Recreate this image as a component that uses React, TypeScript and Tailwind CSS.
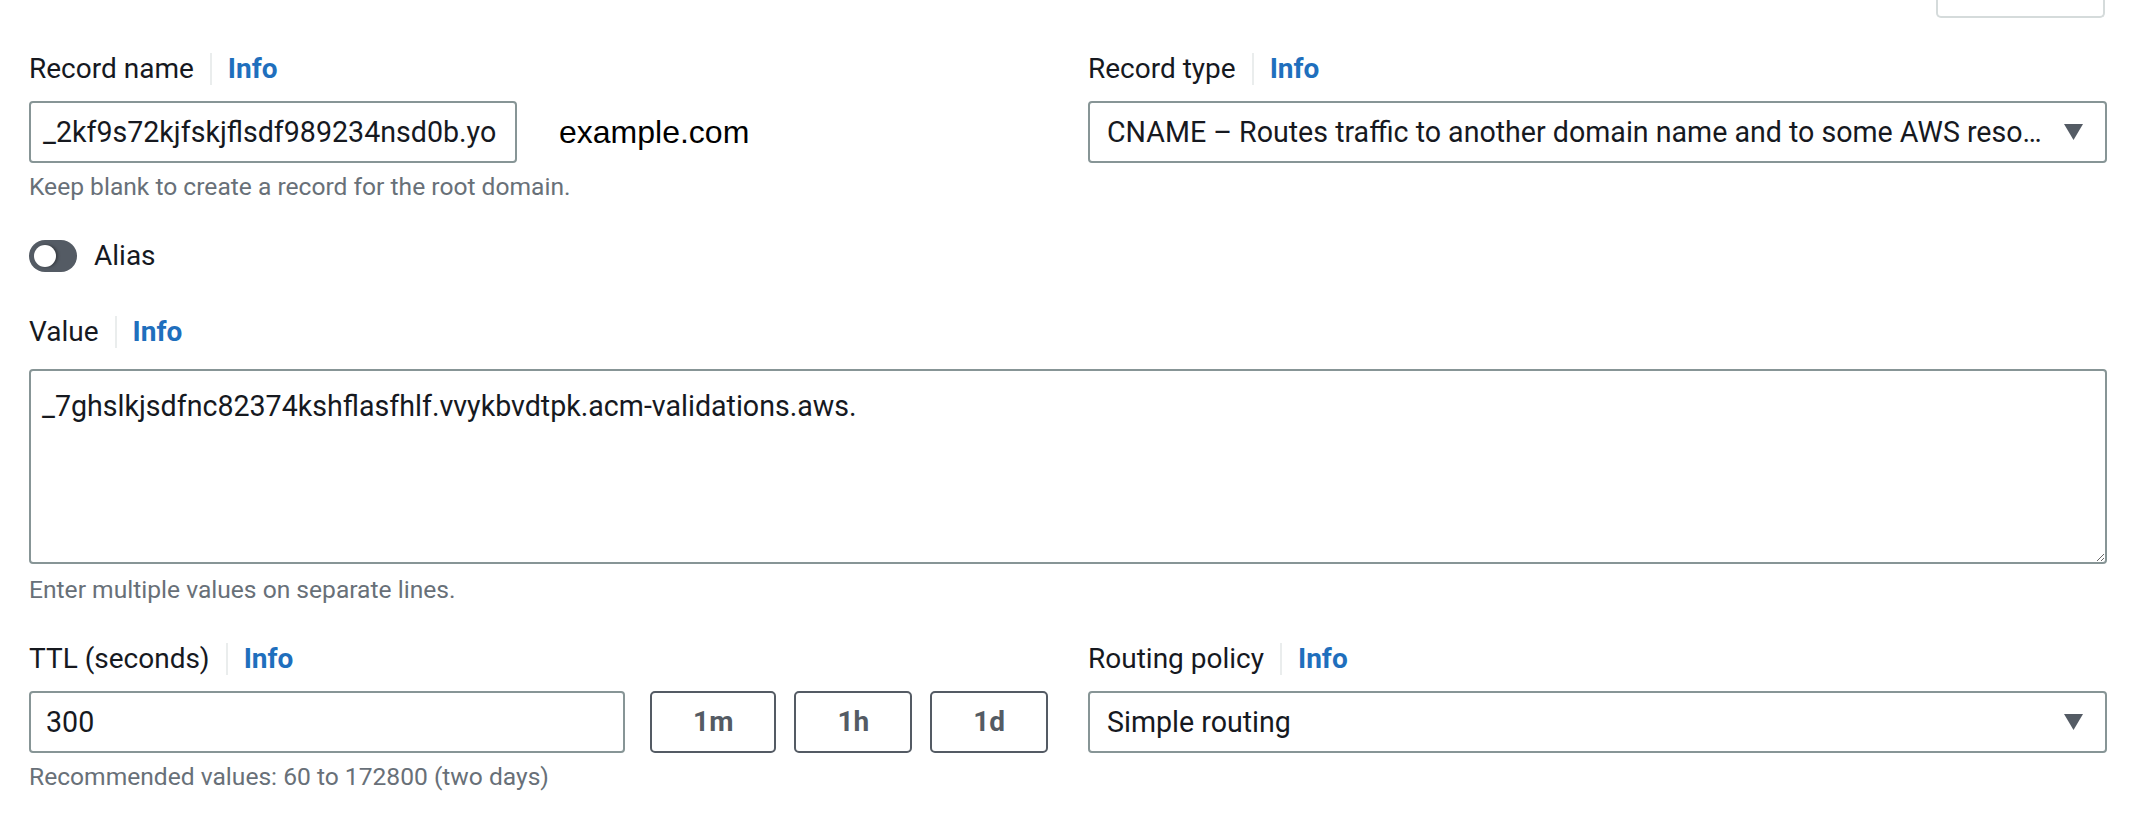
import React from 'react'

const font = { fontFamily: 'Roboto, "Open Sans", sans-serif' }

function Label({ text }: { text: string }) {
  return (
    <div className="flex h-[44px] items-center text-[28px] leading-[44px] text-[#16191f]">
      <span>{text}</span>
      <span className="mx-[16px] h-[32px] w-[2px] bg-[#eaeded]" />
      <span className="font-bold text-[#1f6fbd]">Info</span>
    </div>
  )
}

function Help({ text }: { text: string }) {
  return <div className="text-[24.6px] leading-[32px] text-[#687078]">{text}</div>
}

function Select({ value }: { value: string }) {
  return (
    <div className="flex h-[62px] w-full items-center rounded-[4px] border-2 border-[#879596] bg-white pl-[17px] pr-[22px]">
      <span className="min-w-0 flex-1 whitespace-nowrap pr-[18px] text-[28.6px] text-[#16191f]">{value}</span>
      <svg width="19" height="16" viewBox="0 0 19 16" className="shrink-0">
        <polygon points="0,0 19,0 9.5,16" fill="#545b64" />
      </svg>
    </div>
  )
}

function TtlButton({ text }: { text: string }) {
  return (
    <div className="flex h-[62px] items-center rounded-[5px] border-2 border-[#545b64] px-[41px] text-[28px] font-bold text-[#545b64]">
      {text}
    </div>
  )
}

export default function App() {
  return (
    <div className="min-h-[820px] w-full bg-white pl-[29px] pr-[31px]" style={font}>
      {/* bottom edge of a button cut off above */}
      <div className="flex justify-end">
        <div className="mr-[2px] h-[18px] w-[169px] rounded-b-[5px] border-x-2 border-b-2 border-[#d5dbdb]" />
      </div>

      <div className="mt-[29px] grid grid-cols-2 gap-x-[40px]">
        <div>
          <Label text="Record name" />
          <div className="mt-[10px] flex items-center">
            <div className="flex h-[62px] w-[488px] items-center overflow-hidden whitespace-nowrap rounded-[4px] border-2 border-[#879596] pl-[12px] text-[28.6px] text-[#16191f]">
              _2kf9s72kjfskjflsdf989234nsd0b.yo
            </div>
            <span className="ml-[42px] text-[32px] text-black" style={{ fontFamily: '"Liberation Sans", Arial, sans-serif' }}>
              example.com
            </span>
          </div>
          <div className="mt-[8px]">
            <Help text="Keep blank to create a record for the root domain." />
          </div>
        </div>
        <div>
          <Label text="Record type" />
          <div className="mt-[10px]">
            <Select value="CNAME – Routes traffic to another domain name and to some AWS reso…" />
          </div>
        </div>
      </div>

      <div className="mt-[31px] flex h-[44px] items-center">
        <div className="relative h-[32px] w-[48px] rounded-full bg-[#545b64]">
          <div className="absolute left-[5px] top-[5px] h-[22px] w-[22px] rounded-full bg-white shadow-[2px_0_3px_rgba(0,0,0,0.35)]" />
        </div>
        <span className="ml-[17px] text-[28px] leading-[44px] text-[#16191f]">Alias</span>
      </div>

      <div className="mt-[32px]">
        <Label text="Value" />
        <textarea
          readOnly
          defaultValue="_7ghslkjsdfnc82374kshflasfhlf.vvykbvdtpk.acm-validations.aws."
          className="mt-[15px] block h-[195px] w-full rounded-[4px] border-2 border-[#879596] px-[11px] pt-[13px] text-[28.6px] leading-[44px] text-[#16191f] outline-none"
          style={font}
        />
        <div className="mt-[10px]">
          <Help text="Enter multiple values on separate lines." />
        </div>
      </div>

      <div className="mt-[31px] grid grid-cols-2 gap-x-[40px]">
        <div>
          <Label text="TTL (seconds)" />
          <div className="mt-[10px] flex items-center">
            <div className="flex h-[62px] w-[598px] items-center rounded-[4px] border-2 border-[#879596] pl-[15px] text-[28.6px] text-[#16191f]">
              300
            </div>
            <div className="ml-[25px] flex gap-[18px]">
              <TtlButton text="1m" />
              <TtlButton text="1h" />
              <TtlButton text="1d" />
            </div>
          </div>
          <div className="mt-[8px]">
            <Help text="Recommended values: 60 to 172800 (two days)" />
          </div>
        </div>
        <div>
          <Label text="Routing policy" />
          <div className="mt-[10px]">
            <Select value="Simple routing" />
          </div>
        </div>
      </div>
    </div>
  )
}
